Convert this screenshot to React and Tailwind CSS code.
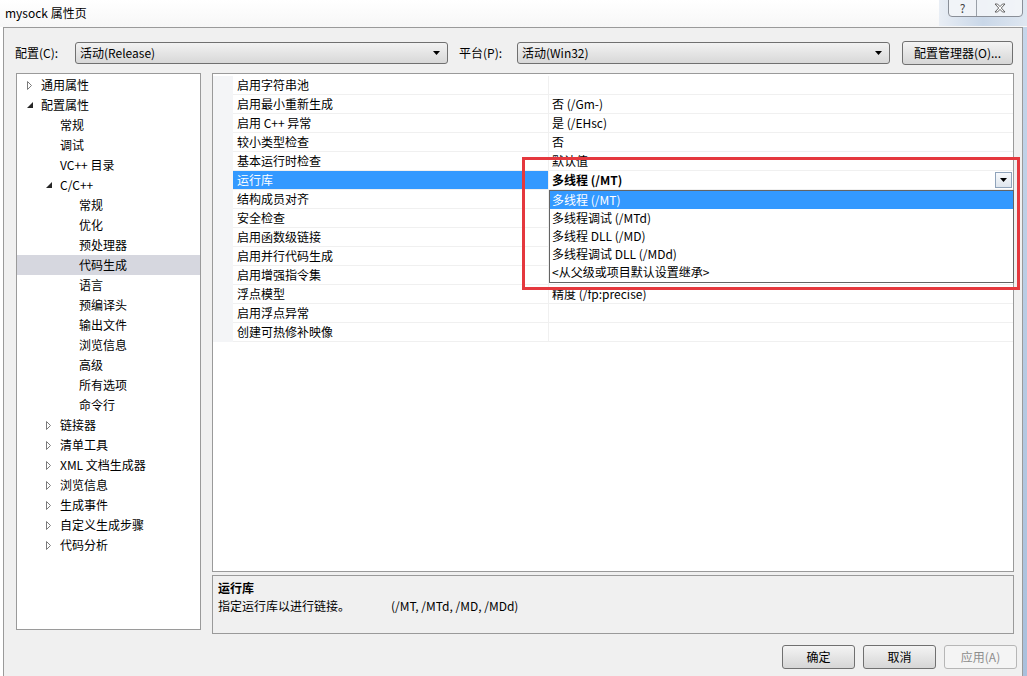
const font = { fontFamily: '"Noto Sans CJK SC", "Noto Sans", sans-serif' };

const tree = [
  { label: "通用属性", level: 0, arrow: "closed" },
  { label: "配置属性", level: 0, arrow: "open" },
  { label: "常规", level: 1 },
  { label: "调试", level: 1 },
  { label: "VC++ 目录", level: 1 },
  { label: "C/C++", level: 1, arrow: "open" },
  { label: "常规", level: 2 },
  { label: "优化", level: 2 },
  { label: "预处理器", level: 2 },
  { label: "代码生成", level: 2, selected: true },
  { label: "语言", level: 2 },
  { label: "预编译头", level: 2 },
  { label: "输出文件", level: 2 },
  { label: "浏览信息", level: 2 },
  { label: "高级", level: 2 },
  { label: "所有选项", level: 2 },
  { label: "命令行", level: 2 },
  { label: "链接器", level: 1, arrow: "closed" },
  { label: "清单工具", level: 1, arrow: "closed" },
  { label: "XML 文档生成器", level: 1, arrow: "closed" },
  { label: "浏览信息", level: 1, arrow: "closed" },
  { label: "生成事件", level: 1, arrow: "closed" },
  { label: "自定义生成步骤", level: 1, arrow: "closed" },
  { label: "代码分析", level: 1, arrow: "closed" },
];

const props = [
  ["启用字符串池", ""],
  ["启用最小重新生成", "否 (/Gm-)"],
  ["启用 C++ 异常", "是 (/EHsc)"],
  ["较小类型检查", "否"],
  ["基本运行时检查", "默认值"],
  ["运行库", "多线程 (/MT)", true],
  ["结构成员对齐", ""],
  ["安全检查", ""],
  ["启用函数级链接", ""],
  ["启用并行代码生成", ""],
  ["启用增强指令集", ""],
  ["浮点模型", "精度 (/fp:precise)"],
  ["启用浮点异常", ""],
  ["创建可热修补映像", ""],
];

const options = [
  "多线程 (/MT)",
  "多线程调试 (/MTd)",
  "多线程 DLL (/MD)",
  "多线程调试 DLL (/MDd)",
  "<从父级或项目默认设置继承>",
];

function Arrow({ type }) {
  if (type === "open") {
    return (
      <svg width="6" height="6" viewBox="0 0 6 6">
        <polygon points="6,0 6,6 0,6" fill="#262626" />
      </svg>
    );
  }
  if (type === "closed") {
    return (
      <svg width="6" height="9" viewBox="0 0 6 9">
        <polygon points="0.5,0.5 4.5,4.5 0.5,8.5" fill="#fff" stroke="#7a7a7a" />
      </svg>
    );
  }
  return null;
}

function DownArrow() {
  return (
    <svg width="7" height="4" viewBox="0 0 7 4">
      <polygon points="0,0 7,0 3.5,4" fill="#000" />
    </svg>
  );
}

function Combo({ text }) {
  return (
    <div className="w-[373px] h-[22px] flex items-center justify-between px-[4px] rounded-[3px] border border-[#707070] bg-gradient-to-b from-[#f2f2f2] to-[#d8d8d8]">
      <span>{text}</span>
      <span className="mr-[3px] flex">
        <DownArrow />
      </span>
    </div>
  );
}

function Button({ children, disabled }) {
  return (
    <div
      className={
        disabled
          ? "w-[73px] h-[24px] flex items-center justify-center rounded-[3px] border border-[#b6b6b6] bg-[#f4f4f4] text-[#8d8d8d]"
          : "w-[73px] h-[24px] flex items-center justify-center rounded-[3px] border border-[#707070] bg-gradient-to-b from-[#f4f4f4] to-[#d6d6d6]"
      }
    >
      {children}
    </div>
  );
}

export default function App() {
  return (
    <div className="w-[1027px] h-[676px] overflow-hidden bg-white text-[12px] text-black relative" style={font}>
      {/* title bar */}
      <div className="h-[27px] flex items-center pl-[5px] pb-[2px] bg-gradient-to-b from-white to-[#f7f7f7]">
        mysock 属性页
      </div>
      <div className="absolute top-0 right-0 w-[88px] h-[26px] bg-gradient-to-r from-[#e9eef5] via-[#c9d7e8] to-[#dfe7f1]" />
      <div className="absolute top-[-1px] right-[4px] flex h-[18px] border border-[#8a8f98] rounded-b-[4px] bg-[#f3f5f8]/90 overflow-hidden">
        <div className="w-[28px] flex items-center justify-center border-r border-[#9aa0a8] text-[#444] text-[12px] leading-none">?</div>
        <div className="w-[45px] flex items-center justify-center">
          <svg width="12" height="10" viewBox="0 0 12 10">
            <path d="M1 1h2.5L6 3.6 8.5 1H11L7.3 5 11 9H8.5L6 6.4 3.5 9H1l3.7-4z" fill="#fff" stroke="#555" strokeWidth="0.9" />
          </svg>
        </div>
      </div>

      <div className="flex h-[649px]">
        <div className="w-[3px] bg-white" />
        {/* dialog body */}
        <div className="w-[1020px] bg-[#f0f0f0] border-l border-t border-r border-[#9a9a9a] flex flex-col">
          <div className="mt-[13px] h-[24px] flex items-center pl-[11px]">
            <span className="w-[60px]">配置(C):</span>
            <Combo text="活动(Release)" />
            <span className="ml-[11px] w-[58px]">平台(P):</span>
            <Combo text="活动(Win32)" />
            <div className="ml-[12px] w-[111px] h-[24px] flex items-center justify-center rounded-[3px] border border-[#707070] bg-gradient-to-b from-[#f4f4f4] to-[#d6d6d6]">
              配置管理器(O)...
            </div>
          </div>

          <div className="mt-[8px] flex items-start pl-[12px]">
            {/* tree */}
            <div className="w-[185px] h-[557px] bg-white border border-[#9a9a9a] pt-[1px]">
              {tree.map((t, i) => (
                <div
                  key={i}
                  className={"h-[20px] flex items-center" + (t.selected ? " bg-[#d6d7df]" : "")}
                  style={{ paddingLeft: 10 + t.level * 19 }}
                >
                  <span className="w-[14px] flex items-center">
                    <Arrow type={t.arrow} />
                  </span>
                  <span>{t.label}</span>
                </div>
              ))}
            </div>

            <div className="ml-[11px] flex flex-col gap-[3px]">
              {/* property grid */}
              <div className="relative w-[802px] h-[499px] bg-white border border-[#9a9a9a] pt-[2px]">
                {props.map(([name, value, sel], i) => (
                  <div key={i} className="h-[19px] flex">
                    <div className="w-[20px] bg-[#f4f5f7]" />
                    <div
                      className={
                        "w-[316px] pl-[4px] flex items-center border-r border-b border-[#f0f0f0]" +
                        (sel ? " bg-[#3399ff] text-white" : "")
                      }
                    >
                      {name}
                    </div>
                    <div className="flex-1 pl-[3px] pr-[1px] flex items-center justify-between border-b border-[#f0f0f0]">
                      <span className={sel ? "font-bold" : ""}>{value}</span>
                      {sel && (
                        <div className="w-[17px] h-[16px] flex items-center justify-center border border-[#8fa3ba] bg-gradient-to-b from-[#f8fafc] to-[#dfe6ee]">
                          <DownArrow />
                        </div>
                      )}
                    </div>
                  </div>
                ))}

                {/* open dropdown list */}
                <div className="absolute left-[336px] top-[116px] w-[465px] h-[93px] bg-white border border-[#646464]">
                  {options.map((o, i) => (
                    <div
                      key={i}
                      className={"h-[18px] flex items-center pl-[2px]" + (i === 0 ? " bg-[#3399ff] text-white" : "")}
                    >
                      {o}
                    </div>
                  ))}
                </div>

                {/* red annotation box */}
                <div className="absolute left-[309px] top-[83px] w-[498px] h-[133px] border-[3px] border-[#e5383e]" />
              </div>

              {/* description */}
              <div className="w-[802px] h-[59px] bg-[#f0f0f0] border border-[#9a9a9a] pl-[5px] pt-[3px] leading-[18px]">
                <div className="font-bold">运行库</div>
                <div className="flex">
                  <span className="w-[173px]">指定运行库以进行链接。</span>
                  <span>(/MT, /MTd, /MD, /MDd)</span>
                </div>
              </div>
            </div>
          </div>

          <div className="mt-[11px] flex justify-end gap-[8px] pr-[5px]">
            <Button>确定</Button>
            <Button>取消</Button>
            <Button disabled>应用(A)</Button>
          </div>
        </div>
        <div className="w-[4px] bg-gradient-to-b from-[#c6d6ea] to-[#a9c0dc]" />
      </div>
    </div>
  );
}
